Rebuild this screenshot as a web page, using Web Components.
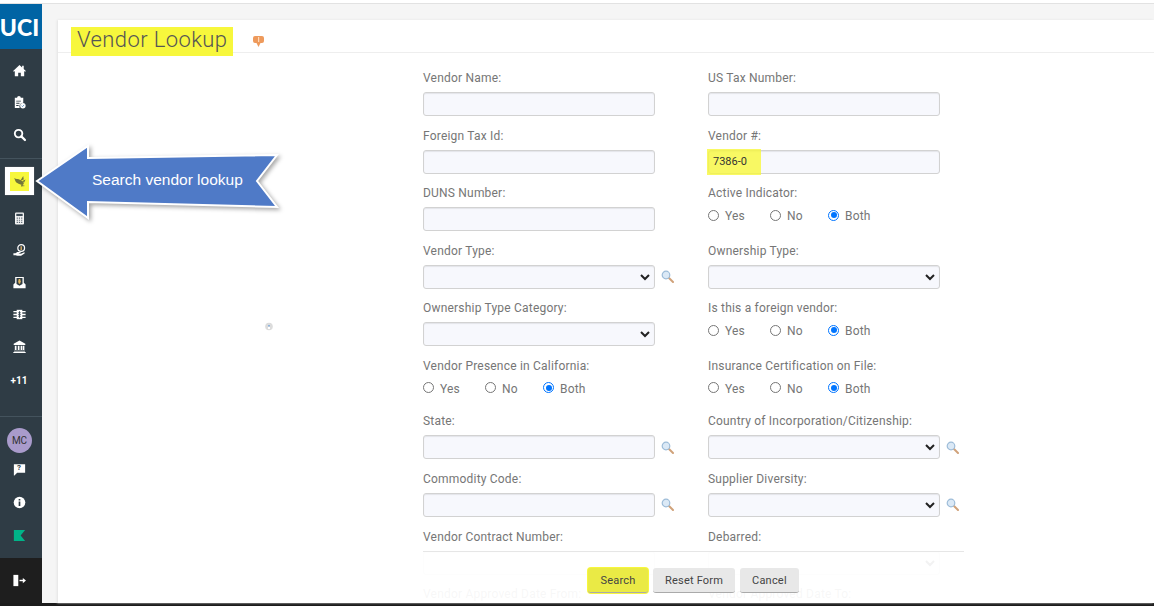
<!DOCTYPE html>
<html>
<head>
<meta charset="utf-8">
<title>Vendor Lookup</title>
<style>
  html, body { margin: 0; height: 606px; overflow: hidden; background: #f5f5f5; font-family: Roboto, "Liberation Sans", sans-serif; }
</style>
</head>
<body>
<app-shell>
  <rail-nav slot="rail"></rail-nav>
  <lookup-card slot="main"></lookup-card>
  <callout-arrow slot="over">Search vendor lookup</callout-arrow>
</app-shell>

<script>
class AppShell extends HTMLElement {
  constructor() {
    super();
    this.attachShadow({mode: 'open'}).innerHTML = `
    <style>
      :host { display: flex; flex-direction: column; height: 606px; position: relative; }
      .top { height: 3px; background: #fff; border-bottom: 1px solid #e2e2e2; flex: none; }
      .body { flex: 1; display: flex; min-height: 0; }
      .main { flex: 1; min-width: 0; padding: 16px 0 0 16px; display: flex; }
      .foot { height: 3px; background: #1c1c1c; flex: none; }
    </style>
    <div class="top"></div>
    <div class="body">
      <slot name="rail"></slot>
      <div class="main"><slot name="main"></slot></div>
    </div>
    <div class="foot"></div>
    <slot name="over"></slot>`;
  }
}

const railIcons = {
  home: '<path fill="#fff" d="M8 2.200 1.200 8.400l.8.9L3 8.500V14h3.600v-3.600h2.800V14H13V8.500l1 .8.8-.9-2.300-2.100V3h-1.700v1.700z"/>',
  clip: '<path fill="#fff" d="M3 3h2.400a2 2 0 0 1 4 0H12v5.200a4 4 0 0 0-3.800 5.600H3zM4.500 6v1h5V6zm0 2.300v1H8v-1zm0 2.300v1h2.600v-1z"/><circle cx="11.600" cy="11.400" r="2.900" fill="#fff"/><path d="m10.200 11.400 1 1 1.800-1.900" stroke="#5b8fc0" fill="none"/>',
  search: '<circle cx="7" cy="7" r="4" fill="none" stroke="#fff" stroke-width="2"/><path d="m10 10 3.800 3.800" stroke="#fff" stroke-width="2.400" stroke-linecap="round"/>',
  calc: '<rect x="3.200" y="1.500" width="9.600" height="13" rx="1.200" fill="#f4f4f4"/><rect x="4.600" y="3" width="6.800" height="2.400" fill="#3c4a55"/><path d="M5 7h1.300v1.300H5zm2.300 0h1.300v1.300H7.300zm2.400 0H11v1.300H9.700zM5 9.200h1.300v1.300H5zm2.300 0h1.300v1.300H7.300zm2.400 0H11v1.300H9.700zM5 11.400h1.300v1.300H5zm2.300 0h1.300v1.300H7.300zm2.400 0H11v1.300H9.700z" fill="#5d6a74"/>',
  coin: '<circle cx="9.800" cy="5.400" r="3.600" fill="none" stroke="#fff" stroke-width="1.300"/><path d="M9.800 3.400v4" stroke="#e8b868" stroke-width="1.400"/><path fill="#fff" d="M1.500 11h2.200l2-1.300h3c.8 0 .9 1.200 0 1.200H7.200l.2.500h2.200l3-1.400c.9-.3 1.400.7.7 1.200l-3.600 2.300H5.500l-1.600-.4H1.500z"/>',
  box: '<path fill="#fff" d="M3.400 2h9.200v6.300L14.500 10v4h-13v-4l1.900-1.700zM4.800 3.300v6.200l3.200 2 3.200-2V3.300z"/><path d="M8 4.200v5.200M6.600 5.400h2.600M6.600 6.800h2.800M6.600 8.200h2.600" stroke="#e0b45c" stroke-width="1.100" fill="none"/>',
  bills: '<path fill="#fff" d="M1.500 4.200h13v1.500h-13zm0 3h13v1.600h-13zm0 3.100h13v1.500h-13z"/><rect x="5" y="3" width="6" height="10" fill="#fff"/><path d="M8 4.600v6.800M6.800 6.200h2.400M6.800 8h2.400M6.800 9.800h2.400" stroke="#3c4a55" stroke-width="1.100"/>',
  bank: '<path fill="#fff" d="M8 1.600 14.200 5v1.300H1.800V5zM3 7.200h1.800v4.600H3zm3.200 0H8v4.600H6.200zm3 0H11v4.600H9.200zm2.400 0h1.600v4.600h-1.600zM2.200 12.400h11.600v1H2.200zM1.400 13.800h13.200v1H1.400z"/>',
  help: '<path fill="#fff" d="M2 2.500h12v9H5.500L2.600 14.500l-.6-.2z"/>',
  info: '<circle cx="8" cy="8" r="6.200" fill="#fff"/><path d="M7.100 4.300h1.800v1.600H7.100zm0 2.500h1.800v5H7.100z" fill="#2f3c45"/>',
  kuali: '<path fill="#00b388" d="M2 2.200h12L9.200 8 14 13.800H2z"/>',
  exit: '<path fill="#fff" d="M1.500 2h5.200v12H1.500z"/><path d="M8 8h5" stroke="#fff" stroke-width="1.500"/><path fill="#fff" d="m11.500 5.200 3.400 2.800-3.400 2.800z"/>'
};
const icon = (name, size) => `<svg width="${size}" height="${size}" viewBox="0 0 16 16">${railIcons[name]}</svg>`;

class RailNav extends HTMLElement {
  constructor() {
    super();
    const item = n => `<div class="item">${icon(n, 15)}</div>`;
    this.attachShadow({mode: 'open'}).innerHTML = `
    <style>
      :host { display: flex; flex-direction: column; width: 42px; flex: none; background: #2f3c45; color: #fff; }
      .logo { height: 45px; background: #0064a4; display: flex; align-items: center; justify-content: center; overflow: hidden;
        font: 900 23px Lato, Roboto, sans-serif; flex: none; padding-right: 3px; box-sizing: border-box; }
      .item { height: 32px; width: 38px; display: flex; align-items: center; justify-content: center; flex: none; }
      .first { border-bottom: 1px solid #44535d; padding: 5px 0 8px; }
      .active { height: 28px; width: 29px; margin: 8px 0 7px 5px; background: #fff; display: flex; align-items: center; justify-content: center; box-shadow: 0 0 1px #888; flex: none; }
      .active span { width: 19px; height: 19px; background: #f7f73c; display: flex; align-items: center; justify-content: center; }
      .more { font: 700 10px Roboto, sans-serif; margin-top: 2px; }
      .spacer { flex: 1; }
      .lower { border-top: 1px solid #44535d; padding-top: 11px; height: 142px; box-sizing: border-box; flex: none; }
      .avatar { width: 25px; height: 25px; margin-left: 7px; border-radius: 50%; background: #a99bcb; color: #333; font: 10px/26px Roboto, sans-serif; text-align: center; }
      .exit { height: 45px; width: 42px; background: #1e1e1e; display: flex; align-items: center; justify-content: center; flex: none; padding-right: 4px; box-sizing: border-box; }
      .help { position: relative; }
      .help b { position: absolute; left: 0; right: 0; top: 10px; text-align: center; color: #2f3c45; font: 700 8px Roboto, sans-serif; }
      .gap { margin-top: 1px; }
    </style>
    <div class="logo">UCI</div>
    <div class="first">${item('home')}${item('clip')}${item('search')}</div>
    <div class="active"><span><svg width="14" height="12" viewBox="0 0 15 13">
      <ellipse cx="7" cy="7.500" rx="5" ry="2.300" transform="rotate(28 7 7.500)" fill="#74773a"/>
      <path d="M1 3.500 6 5 4 8zM8 6l3-5 .6 4zM10 6.500l3.500-1.500-1.500 3zM9 10.500l4 1.500-4.500.5z" fill="#74773a"/>
    </svg></span></div>
    ${item('calc')}${item('coin')}${item('box')}${item('bills')}${item('bank')}
    <div class="item more">+11</div>
    <div class="spacer"></div>
    <div class="lower">
      <div class="avatar">MC</div>
      <div class="item help">${icon('help', 15)}<b>?</b></div>
      <div class="item gap">${icon('info', 15)}</div>
      <div class="item gap">${icon('kuali', 15)}</div>
    </div>
    <div class="exit">${icon('exit', 15)}</div>`;
  }
}

class FormField extends HTMLElement {
  constructor() {
    super();
    this.attachShadow({mode: 'open'}).innerHTML = `
    <style>
      :host { display: block; height: 57.600px; font: 12px/14px Roboto, sans-serif; letter-spacing: .2px; color: #767676; }
      :host([short]) { height: 55.400px; }
      .lbl { display: block; height: 14px; margin-bottom: 7px; }
    </style>
    <span class="lbl"></span><slot></slot>`;
  }
  connectedCallback() {
    this.shadowRoot.querySelector('.lbl').textContent = this.getAttribute('label');
  }
}

class FieldBox extends HTMLElement {
  constructor() {
    super();
    this.attachShadow({mode: 'open'}).innerHTML = `
    <style>
      :host { display: flex; align-items: center; gap: 6px; letter-spacing: 0; }
      .box { width: 232px; height: 24px; box-sizing: border-box; border: 1px solid #d2d2d2; border-radius: 3px; background: #f7f8fd; box-shadow: inset 0 1px 1px rgba(0,0,0,.08);
        display: flex; align-items: center; justify-content: space-between; padding: 0 4px; font: 11px Roboto, sans-serif; color: #333; position: relative; }
      svg.chev { display: none; }
      :host([select]) svg.chev { display: block; }
      svg.lens { display: none; }
      :host([lookup]) svg.lens { display: block; }
      .mark { position: absolute; left: -2px; top: -2px; width: 54px; height: 26px; background: rgba(247,247,60,.8); }
      .txt { position: relative; }
    </style>
    <div class="box"><span class="txt"><slot></slot></span>
      <svg class="chev" width="10" height="8" viewBox="0 0 10 8"><path d="M1 2l4 4 4-4" fill="none" stroke="#222" stroke-width="2"/></svg>
    </div>
    <svg class="lens" width="13" height="13" viewBox="0 0 13 13">
      <path d="m8 8 4 4" stroke="#d0a27a" stroke-width="2" stroke-linecap="round"/>
      <circle cx="5" cy="5" r="3.800" fill="#dbe9f6" stroke="#9dbcd8" stroke-width="1.200"/>
    </svg>`;
    if (this.hasAttribute('marked')) {
      const m = document.createElement('div');
      m.className = 'mark';
      this.shadowRoot.querySelector('.box').prepend(m);
    }
  }
}

class RadioSet extends HTMLElement {
  constructor() {
    super();
    this.attachShadow({mode: 'open'}).innerHTML = `
    <style>
      :host { display: flex; height: 18px; align-items: center; font: 12px/14px Roboto, sans-serif; letter-spacing: .2px; color: #767676; margin-top: 1px; }
      label { display: flex; align-items: center; gap: 6px; }
      label:nth-of-type(1) { width: 62px; }
      label:nth-of-type(2) { width: 58px; }
      i { width: 9px; height: 9px; border: 1px solid #767676; border-radius: 50%; background: #fff; display: block; position: relative; top: -1px; }
      .on { border-color: #0075ff; }
      .on::after { content: ""; position: absolute; inset: 1.500px; border-radius: 50%; background: #0075ff; }
    </style>
    <label><i></i>Yes</label><label><i></i>No</label><label><i class="on"></i>Both</label>`;
  }
}

class LookupCard extends HTMLElement {
  constructor() {
    super();
    const left = `
      <form-field label="Vendor Name:"><field-box></field-box></form-field>
      <form-field label="Foreign Tax Id:"><field-box></field-box></form-field>
      <form-field label="DUNS Number:"><field-box></field-box></form-field>
      <form-field label="Vendor Type:"><field-box select lookup></field-box></form-field>
      <form-field label="Ownership Type Category:"><field-box select></field-box></form-field>
      <form-field short label="Vendor Presence in California:"><radio-set></radio-set></form-field>
      <form-field label="State:"><field-box lookup></field-box></form-field>
      <form-field label="Commodity Code:"><field-box lookup></field-box></form-field>
      <form-field label="Vendor Contract Number:"><field-box></field-box></form-field>
      <form-field label="Vendor Approved Date From:"></form-field>`;
    const right = `
      <form-field label="US Tax Number:"><field-box></field-box></form-field>
      <form-field label="Vendor #:"><field-box marked>7386-0</field-box></form-field>
      <form-field label="Active Indicator:"><radio-set></radio-set></form-field>
      <form-field label="Ownership Type:"><field-box select></field-box></form-field>
      <form-field label="Is this a foreign vendor:"><radio-set></radio-set></form-field>
      <form-field short label="Insurance Certification on File:"><radio-set></radio-set></form-field>
      <form-field label="Country of Incorporation/Citizenship:"><field-box select lookup></field-box></form-field>
      <form-field label="Supplier Diversity:"><field-box select lookup></field-box></form-field>
      <form-field label="Debarred:"><field-box select></field-box></form-field>
      <form-field label="Vendor Approved Date To:"></form-field>`;
    this.attachShadow({mode: 'open'}).innerHTML = `
    <style>
      :host { display: block; flex: 1; background: #fff; position: relative; overflow: hidden; box-shadow: -1px 0 2px #e3e3e3; }
      header { height: 32px; border-bottom: 1px solid #eee; display: flex; align-items: flex-start; padding-left: 13px; gap: 20px; position: relative; }
      h1 { margin: 7px 0 0; padding: 0 6px; height: 29px; position: relative; background: #f7f73c; font: 300 22px/25px Roboto, sans-serif; letter-spacing: .4px; color: #555; white-space: nowrap; }
      header svg { margin-top: 16px; }
      .form { display: grid; grid-template-columns: 285px 285px; padding: 18px 0 0 365px; }
      .rule { position: absolute; left: 365px; width: 541px; top: 531px; height: 1px; background: #e6e6e6; }
      .veil { position: absolute; left: 0; right: 0; top: 532px; bottom: 0; }
      .veil .shade { position: absolute; left: 0; width: 906px; top: 0; bottom: 0; background: rgba(255,255,255,.94); }
      .btns { position: relative; display: flex; gap: 5px; margin: 16px 0 0 530px; }
      .pointer { position: absolute; left: 207px; top: 302px; filter: blur(.4px); }
    </style>
    <header>
      <h1>Vendor Lookup</h1>
      <svg width="11" height="11" viewBox="0 0 11 11"><path fill="#ee9a5c" d="M2 0h7a2 2 0 0 1 2 2v3a2 2 0 0 1-2 2H7.500L5.500 11l-2-4H2a2 2 0 0 1-2-2V2a2 2 0 0 1 2-2z"/><rect x="5" y="1" width="1.200" height="5" fill="#ffd9b8"/></svg>
    </header>
    <div class="form"><div>${left}</div><div>${right}</div></div>
    <div class="rule"></div>
    <div class="veil"><div class="shade"></div>
      <div class="btns">
        <action-button primary>Search</action-button>
        <action-button>Reset Form</action-button>
        <action-button>Cancel</action-button>
      </div>
    </div>
    <svg class="pointer" width="8" height="9" viewBox="0 0 8 9"><circle cx="4" cy="4.500" r="3.800" fill="#dcdcdc"/><rect x="3" y="3" width="2" height="1.500" fill="#8fb5de"/><rect x="3" y="5" width="2" height="2" fill="#fff"/></svg>`;
  }
}

class ActionButton extends HTMLElement {
  constructor() {
    super();
    this.attachShadow({mode: 'open'}).innerHTML = `
    <style>
      :host { display: block; }
      button { height: 25px; padding: 0 12px; border: 0; border-bottom: 1px solid #aaa; border-radius: 3px; background: #e8e8e8; color: #444; font: 11px Roboto, sans-serif; letter-spacing: .2px; }
      :host([primary]) button { background: #eaea45; box-shadow: 0 0 0 1px #f7f73c; width: 60px; padding: 0; }
    </style>
    <button type="button"><slot></slot></button>`;
  }
}

class CalloutArrow extends HTMLElement {
  constructor() {
    super();
    this.attachShadow({mode: 'open'}).innerHTML = `
    <style>
      :host { position: absolute; left: 34px; top: 144px; width: 250px; height: 76px; display: block; }
      svg { position: absolute; inset: 0; overflow: visible; filter: drop-shadow(2px 2px 2px rgba(0,0,0,.35)); }
      span { position: absolute; left: 58px; top: 27px; font: 15.500px/18px "Liberation Sans", sans-serif; color: #fff; white-space: nowrap; }
    </style>
    <svg width="250" height="76" viewBox="0 0 250 76">
      <path d="M3 37 54 2v12L243 11l-20 26 20 26L54 58v16z" fill="#4f7ac7" stroke="#fff" stroke-width="2"/>
    </svg>
    <span><slot></slot></span>`;
  }
}

customElements.define('app-shell', AppShell);
customElements.define('rail-nav', RailNav);
customElements.define('form-field', FormField);
customElements.define('field-box', FieldBox);
customElements.define('radio-set', RadioSet);
customElements.define('action-button', ActionButton);
customElements.define('lookup-card', LookupCard);
customElements.define('callout-arrow', CalloutArrow);
</script>
</body>
</html>
